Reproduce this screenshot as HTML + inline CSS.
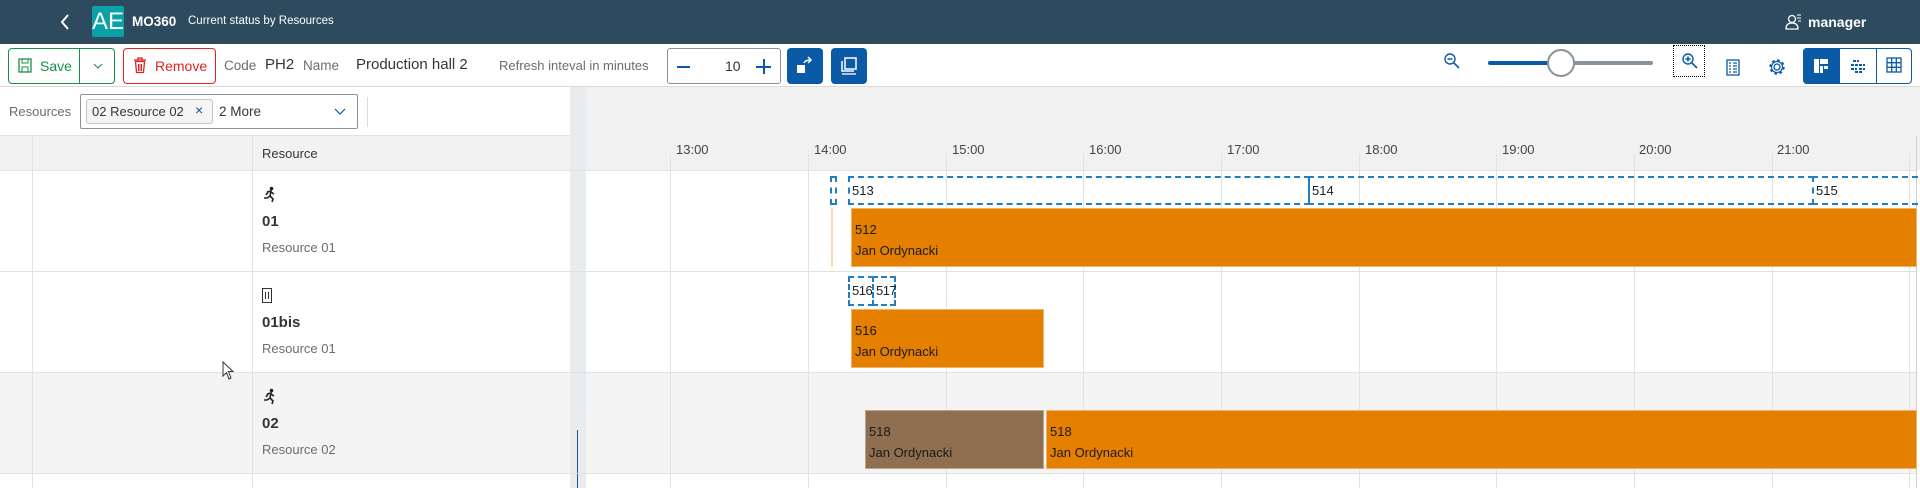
<!DOCTYPE html>
<html><head><meta charset="utf-8"><style>
*{margin:0;padding:0;box-sizing:border-box}
body{width:1920px;height:488px;overflow:hidden;background:#fff;font-family:"Liberation Sans",sans-serif;position:relative;color:#32363a}
.a{position:absolute}
.hdr{left:0;top:0;width:1920px;height:44px;background:#2d4a5e}
.t{position:absolute;white-space:nowrap}
.vl{position:absolute;width:1px;background:#e2e2e2}
.hl{position:absolute;height:1px;background:#e2e2e2}
.bar{position:absolute;background:#e47f00;font-size:13px;color:#1a1a1a;padding:10px 0 0 3px;line-height:21px;border:1px solid #f1b466}
.dash{position:absolute;border:2px dashed #1f7ec4;font-size:13px;color:#222;line-height:25px;padding-left:2px}
.bbtn{position:absolute;top:48px;width:36px;height:36px;background:#0a5aa6;border-radius:4px}
</style></head><body>
<div class="a hdr"></div>
<svg class="a" style="left:58px;top:13px" width="14" height="18"><path d="M10 2 L4 9 L10 16" stroke="#fff" stroke-width="2" fill="none"/></svg>
<div class="a" style="left:92px;top:6px;width:32px;height:31px;background:#0aa2a8;border-radius:2px;color:#fff;font-size:24px;line-height:31px;text-align:center">AE</div>
<div class="t" style="left:132px;top:14px;font-size:13.5px;font-weight:bold;color:#fff">MO360</div>
<div class="t" style="left:188px;top:15px;font-size:11.5px;color:#fff">Current status by Resources</div>
<svg class="a" style="left:1785px;top:13px" width="18" height="18"><circle cx="7" cy="6" r="3.5" stroke="#fff" fill="none" stroke-width="1.3"/><path d="M1 16 Q1 10 7 10 Q13 10 13 16 Z" stroke="#fff" fill="none" stroke-width="1.3"/><path d="M12 2h4M12 5h4M13 8h3" stroke="#fff" stroke-width="1"/></svg>
<div class="t" style="left:1808px;top:14px;font-size:14px;font-weight:bold;color:#fff">manager</div>

<!-- toolbar -->
<div class="a" style="left:8px;top:48px;width:107px;height:36px;border:1px solid #188f4a;border-radius:4px"></div>
<div class="a" style="left:79px;top:48px;width:1px;height:36px;background:#188f4a"></div>
<svg class="a" style="left:18px;top:58px" width="15" height="16"><rect x="1" y="1" width="12" height="13" fill="none" stroke="#188f4a" stroke-width="1.3"/><rect x="4" y="1" width="6" height="4" fill="none" stroke="#188f4a"/><rect x="4" y="9" width="6" height="5" fill="none" stroke="#188f4a"/></svg>
<div class="t" style="left:40px;top:58px;font-size:14px;color:#188f4a">Save</div>
<svg class="a" style="left:93px;top:62px" width="10" height="8"><path d="M1 2 L5 6 L9 2" stroke="#188f4a" fill="none"/></svg>
<div class="a" style="left:123px;top:48px;width:93px;height:36px;border:1px solid #d22;border-radius:4px"></div>
<svg class="a" style="left:133px;top:57px" width="14" height="17"><path d="M1 3h12M5 3V1h4v2" stroke="#d22" fill="none" stroke-width="1.3"/><path d="M2.5 4.5l1 11h7l1-11z" stroke="#d22" fill="none" stroke-width="1.3"/><path d="M5.5 7v7M7 7v7M8.5 7v7" stroke="#d22"/></svg>
<div class="t" style="left:155px;top:58px;font-size:14px;color:#d22">Remove</div>
<div class="t" style="left:224px;top:58px;font-size:13.5px;color:#6a6d70">Code</div>
<div class="t" style="left:265px;top:56px;font-size:15px;color:#32363a">PH2</div>
<div class="t" style="left:303px;top:58px;font-size:13.5px;color:#6a6d70">Name</div>
<div class="t" style="left:356px;top:56px;font-size:15px;color:#32363a">Production hall 2</div>
<div class="t" style="left:499px;top:58px;font-size:13px;color:#6a6d70">Refresh inteval in minutes</div>
<div class="a" style="left:667px;top:48px;width:114px;height:36px;border:1px solid #89919a;border-radius:3px"></div>
<div class="a" style="left:677px;top:66px;width:13px;height:2px;background:#0a5aa6"></div>
<div class="t" style="left:725px;top:58px;font-size:14px;color:#32363a">10</div>
<div class="a" style="left:756px;top:66px;width:15px;height:2px;background:#0a5aa6"></div>
<div class="a" style="left:762.5px;top:59px;width:2px;height:15px;background:#0a5aa6"></div>
<div class="bbtn" style="left:787px"></div>
<svg class="a" style="left:795px;top:56px" width="20" height="20"><rect x="2" y="9" width="8" height="8" fill="#fff"/><path d="M9 7 Q10 4 16 4 M13 1 L16 4 L13 7" stroke="#fff" fill="none" stroke-width="1.5"/></svg>
<div class="bbtn" style="left:831px"></div>
<svg class="a" style="left:839px;top:56px" width="20" height="22"><rect x="6" y="2" width="11" height="11" fill="none" stroke="#fff" stroke-width="1.5"/><path d="M3 5v10h12" stroke="#fff" fill="none" stroke-width="1.5"/><path d="M3 18h14" stroke="#fff" stroke-width="1.3"/></svg>

<svg class="a" style="left:1443px;top:52px" width="18" height="18"><circle cx="7" cy="7" r="5" stroke="#0a5aa6" fill="none" stroke-width="1.4"/><path d="M4.5 7h5M11 11l5 5" stroke="#0a5aa6" stroke-width="1.6"/></svg>
<div class="a" style="left:1488px;top:61px;width:73px;height:4px;background:#0a5aa6;border-radius:2px"></div>
<div class="a" style="left:1561px;top:61px;width:92px;height:4px;background:#89919a;border-radius:2px"></div>
<div class="a" style="left:1547px;top:49px;width:28px;height:28px;border-radius:50%;background:#fff;border:2px solid #89919a"></div>
<div class="a" style="left:1673px;top:45px;width:32px;height:32px;border:1px dotted #000"></div>
<svg class="a" style="left:1681px;top:52px" width="18" height="18"><circle cx="7" cy="7" r="5" stroke="#0a5aa6" fill="none" stroke-width="1.4"/><path d="M4.5 7h5M7 4.5v5M11 11l5 5" stroke="#0a5aa6" stroke-width="1.6"/></svg>
<svg class="a" style="left:1726px;top:59px" width="14" height="17"><rect x="1" y="1" width="12" height="15" fill="none" stroke="#0a5aa6" stroke-width="1.3"/><path d="M3 4h2M3 7h2M3 10h2M3 13h2M7 4h4M7 7h4M7 10h4M7 13h4" stroke="#0a5aa6" stroke-width="1.3"/></svg>
<svg class="a" style="left:1768px;top:58px" width="18" height="18"><circle cx="9" cy="9" r="3" stroke="#0a5aa6" fill="none" stroke-width="1.3"/><circle cx="9" cy="9" r="6.5" stroke="#0a5aa6" fill="none" stroke-width="2.4" stroke-dasharray="2.5 2.6"/><circle cx="9" cy="9" r="5.5" stroke="#0a5aa6" fill="none" stroke-width="1.2"/></svg>
<div class="a" style="left:1803px;top:48px;width:109px;height:36px;border:1px solid #0a5aa6;border-radius:4px"></div>
<div class="a" style="left:1803px;top:48px;width:37px;height:36px;background:#0a5aa6;border-radius:4px 0 0 4px"></div>
<div class="a" style="left:1876px;top:48px;width:1px;height:36px;background:#0a5aa6"></div>
<svg class="a" style="left:1813px;top:58px" width="16" height="16"><rect x="1" y="1" width="5" height="14" fill="#fff"/><rect x="7" y="1" width="8" height="5" fill="#fff"/><rect x="7" y="8" width="3" height="7" fill="#fff"/><rect x="11" y="8" width="4" height="3" fill="#fff"/></svg>
<svg class="a" style="left:1850px;top:59px" width="16" height="14"><path d="M3 2h6M1 6h14M1 10h6M9 10h6M5 13h8" stroke="#0a5aa6" stroke-width="2" stroke-dasharray="3 1"/></svg>
<svg class="a" style="left:1886px;top:57px" width="16" height="16"><rect x="1" y="1" width="14" height="14" fill="none" stroke="#0a5aa6" stroke-width="1.3"/><path d="M5.7 1v14M10.3 1v14M1 5.7h14M1 10.3h14" stroke="#0a5aa6" stroke-width="1.3"/></svg>
<div class="hl" style="left:0;top:86px;width:1920px;background:#d9d9d9"></div>

<!-- resources filter -->
<div class="t" style="left:9px;top:104px;font-size:13px;color:#6a6d70">Resources</div>
<div class="a" style="left:80px;top:94px;width:278px;height:35px;border:1px solid #89919a;border-radius:2px"></div>
<div class="a" style="left:86px;top:99px;width:127px;height:25px;border:1px solid #c4c4c4;background:#f5f5f5;border-radius:3px"></div>
<div class="t" style="left:92px;top:104px;font-size:13px;color:#32363a">02 Resource 02</div>
<div class="t" style="left:195px;top:102px;font-size:14px;color:#0a5aa6">×</div>
<div class="t" style="left:219px;top:104px;font-size:13.5px;color:#32363a">2 More</div>
<svg class="a" style="left:334px;top:108px" width="12" height="8"><path d="M1 1 L6 6 L11 1" stroke="#0a5aa6" fill="none" stroke-width="1.2"/></svg>
<div class="a" style="left:367px;top:97px;width:1px;height:30px;background:#d9d9d9"></div>

<!-- splitter & gantt bg -->
<div class="a" style="left:570px;top:87px;width:16px;height:401px;background:#e8ecee"></div>
<div class="a" style="left:577px;top:430px;width:1px;height:58px;background:#0a5aa6"></div>
<div class="a" style="left:586px;top:87px;width:1334px;height:83px;background:#f1f1f1"></div>
<div class="a" style="left:0;top:136px;width:570px;height:34px;background:#f2f2f2"></div>
<div class="a" style="left:0;top:372px;width:570px;height:101px;background:#f4f4f4"></div>
<div class="a" style="left:586px;top:372px;width:1330px;height:101px;background:#f4f4f4"></div>
<div class="hl" style="left:0;top:135px;width:570px"></div>
<div class="hl" style="left:0;top:170px;width:1916px"></div>
<div class="hl" style="left:0;top:271px;width:1916px"></div>
<div class="hl" style="left:0;top:372px;width:1916px"></div>
<div class="hl" style="left:0;top:473px;width:1916px"></div>
<div class="vl" style="left:32px;top:136px;height:352px"></div>
<div class="vl" style="left:252px;top:136px;height:352px"></div>
<div class="vl" style="left:1916px;top:136px;height:352px;background:#d0d0d0"></div>
<div class="t" style="left:262px;top:146px;font-size:13px;color:#32363a">Resource</div>

<!-- timeline -->
<div class="vl" style="left:670px;top:154px;height:334px"></div><div class="t" style="left:676px;top:142px;font-size:13px;color:#444">13:00</div>
<div class="vl" style="left:808px;top:154px;height:334px"></div><div class="t" style="left:814px;top:142px;font-size:13px;color:#444">14:00</div>
<div class="vl" style="left:946px;top:154px;height:334px"></div><div class="t" style="left:952px;top:142px;font-size:13px;color:#444">15:00</div>
<div class="vl" style="left:1083px;top:154px;height:334px"></div><div class="t" style="left:1089px;top:142px;font-size:13px;color:#444">16:00</div>
<div class="vl" style="left:1221px;top:154px;height:334px"></div><div class="t" style="left:1227px;top:142px;font-size:13px;color:#444">17:00</div>
<div class="vl" style="left:1359px;top:154px;height:334px"></div><div class="t" style="left:1365px;top:142px;font-size:13px;color:#444">18:00</div>
<div class="vl" style="left:1496px;top:154px;height:334px"></div><div class="t" style="left:1502px;top:142px;font-size:13px;color:#444">19:00</div>
<div class="vl" style="left:1634px;top:154px;height:334px"></div><div class="t" style="left:1639px;top:142px;font-size:13px;color:#444">20:00</div>
<div class="vl" style="left:1772px;top:154px;height:334px"></div><div class="t" style="left:1777px;top:142px;font-size:13px;color:#444">21:00</div>
<div class="vl" style="left:1909px;top:154px;height:334px"></div>

<!-- rows left -->
<svg class="a" style="left:262px;top:186px" width="14" height="17"><circle cx="9.5" cy="2.5" r="1.8" fill="#222"/><path d="M5 6 L9 5 L8 10 L11 13 L10 16 M8 10 L5 12 L2 12 M9 6 L12 8 M6 6 L4 9" stroke="#222" stroke-width="1.6" fill="none"/></svg>
<div class="t" style="left:262px;top:213px;font-size:15px;font-weight:bold;color:#32363a">01</div>
<div class="t" style="left:262px;top:240px;font-size:13px;color:#6a6d70">Resource 01</div>
<svg class="a" style="left:262px;top:288px" width="10" height="15"><rect x="0.5" y="0.5" width="9" height="14" fill="none" stroke="#333"/><path d="M3.5 4v7M6.5 4v7" stroke="#333"/></svg>
<div class="t" style="left:262px;top:314px;font-size:15px;font-weight:bold;color:#32363a">01bis</div>
<div class="t" style="left:262px;top:341px;font-size:13px;color:#6a6d70">Resource 01</div>
<svg class="a" style="left:262px;top:388px" width="14" height="17"><circle cx="9.5" cy="2.5" r="1.8" fill="#222"/><path d="M5 6 L9 5 L8 10 L11 13 L10 16 M8 10 L5 12 L2 12 M9 6 L12 8 M6 6 L4 9" stroke="#222" stroke-width="1.6" fill="none"/></svg>
<div class="t" style="left:262px;top:415px;font-size:15px;font-weight:bold;color:#32363a">02</div>
<div class="t" style="left:262px;top:442px;font-size:13px;color:#6a6d70">Resource 02</div>
<svg class="a" style="left:222px;top:361px" width="12" height="20"><path d="M1 1 L1 15 L4.5 11.5 L7 18 L9 17 L6.5 10.5 L11 10.5 Z" fill="#fff" stroke="#333"/></svg>

<!-- bars -->
<div class="dash" style="left:830px;top:176px;width:7px;height:29px"></div>
<div class="dash" style="left:848px;top:176px;width:462px;height:29px">513</div>
<div class="dash" style="left:1308px;top:176px;width:506px;height:29px;border-left-style:solid;border-left-width:2px">514</div>
<div class="dash" style="left:1812px;top:176px;width:106px;height:29px;border-right:none">515</div>
<div class="a" style="left:831px;top:208px;width:2px;height:59px;background:#f8dcb6"></div>
<div class="bar" style="left:851px;top:208px;width:1066px;height:59px">512<br>Jan Ordynacki</div>
<div class="dash" style="left:848px;top:276px;width:26px;height:30px;letter-spacing:-0.5px">516</div>
<div class="dash" style="left:872px;top:276px;width:24px;height:30px;letter-spacing:-0.5px">517</div>
<div class="bar" style="left:851px;top:309px;width:193px;height:59px">516<br>Jan Ordynacki</div>
<div class="bar" style="left:865px;top:410px;width:179px;height:59px;background:#8f6f4f;border-color:#b9a48d">518<br>Jan Ordynacki</div>
<div class="bar" style="left:1046px;top:410px;width:871px;height:59px">518<br>Jan Ordynacki</div>
</body></html>
